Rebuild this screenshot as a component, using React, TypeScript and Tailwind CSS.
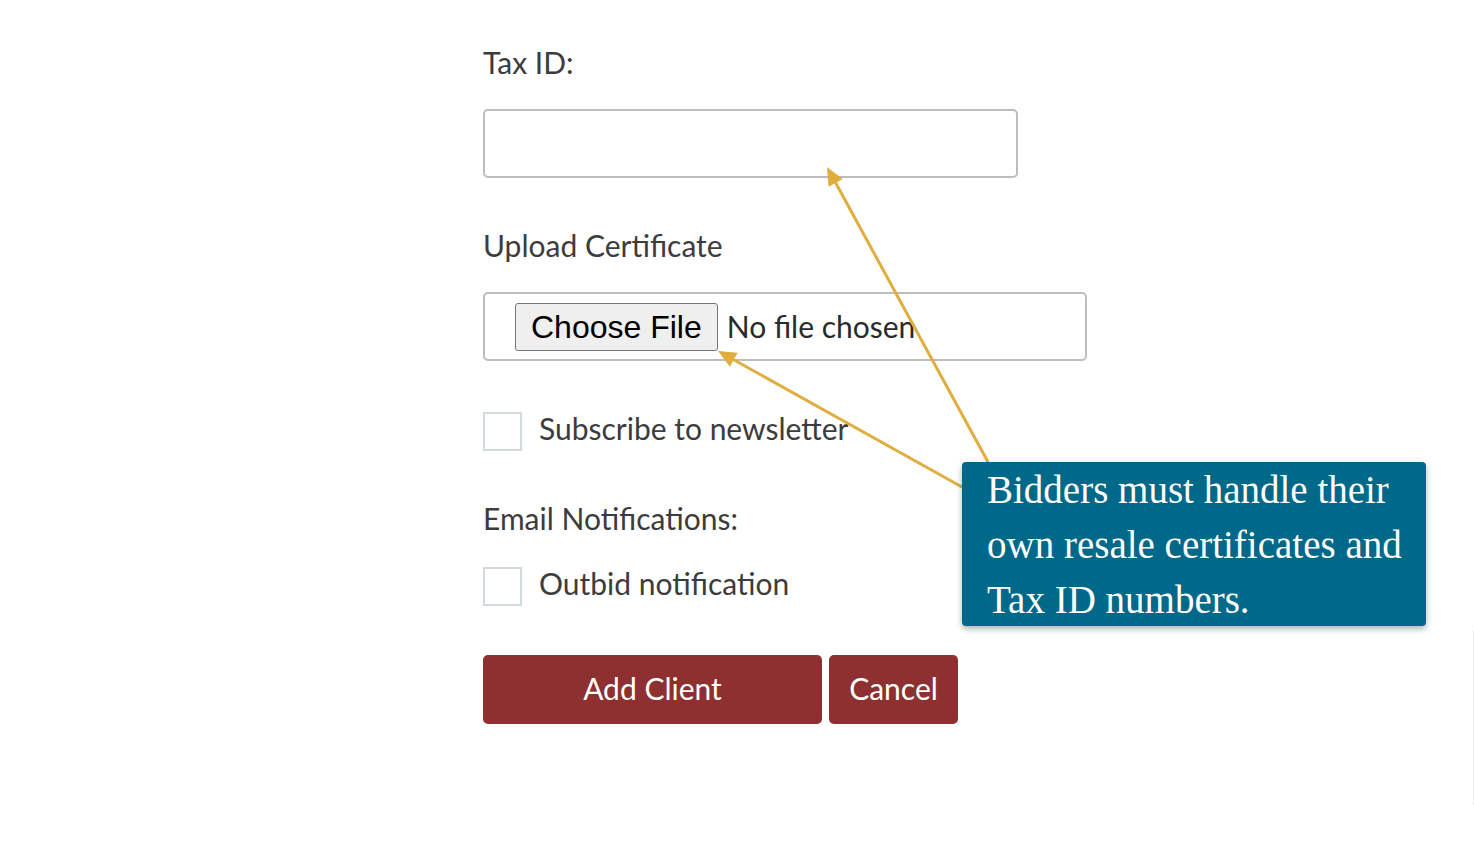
import React from 'react';

const sans = { fontFamily: 'Lato, "Noto Sans", sans-serif' };

function arrowHead(x1: number, y1: number, x2: number, y2: number, len = 18, half = 8) {
  const dx = x2 - x1;
  const dy = y2 - y1;
  const d = Math.hypot(dx, dy);
  const ux = dx / d;
  const uy = dy / d;
  const bx = x2 - ux * len;
  const by = y2 - uy * len;
  const px = -uy * half;
  const py = ux * half;
  return {
    points: `${x2},${y2} ${bx + px},${by + py} ${bx - px},${by - py}`,
    bx,
    by,
  };
}

function Arrow({ x1, y1, x2, y2 }: { x1: number; y1: number; x2: number; y2: number }) {
  const h = arrowHead(x1, y1, x2, y2);
  return (
    <g>
      <line x1={x1} y1={y1} x2={h.bx} y2={h.by} stroke="#dfae3f" strokeWidth={3} />
      <polygon points={h.points} fill="#dfae3f" />
    </g>
  );
}

function Check({ label }: { label: string }) {
  return (
    <label className="flex items-center gap-[17px] h-[39px]">
      <span className="w-[39px] h-[39px] border-2 border-[#d3dadd] bg-white" />
      <span className="text-[30px] leading-[40px] -mt-[8px] text-[#3c3c3c]">{label}</span>
    </label>
  );
}

export default function App() {
  return (
    <div className="relative w-[1474px] h-[846px] bg-white overflow-hidden" style={sans}>
      <div className="ml-[483px] pt-[42px] flex flex-col">
        <div className="text-[30px] leading-[40px] text-[#3c3c3c]">Tax ID:</div>
        <div className="mt-[27px] w-[535px] h-[69px] border-2 border-[#bdbdbd] rounded-[5px]" />

        <div className="mt-[47px] text-[30px] leading-[40px] text-[#3c3c3c]">Upload Certificate</div>
        <div className="mt-[27px] w-[604px] h-[69px] border-2 border-[#bdbdbd] rounded-[5px] flex items-center pl-[30px]">
          <span
            className="h-[48px] px-[15px] flex items-center bg-[#efefef] border-[1.5px] border-[#767676] rounded-[3px] text-[32px] text-black"
            style={{ fontFamily: '"Liberation Sans", Arial, sans-serif' }}
          >
            Choose File
          </span>
          <span className="ml-[9px] text-[30px] text-[#2a2a2a]">No file chosen</span>
        </div>

        <div className="mt-[51px]">
          <Check label="Subscribe to newsletter" />
        </div>

        <div className="mt-[47px] text-[30px] leading-[40px] text-[#3c3c3c]">Email Notifications:</div>
        <div className="mt-[29px]">
          <Check label="Outbid notification" />
        </div>

        <div className="mt-[49px] flex gap-[7px]">
          <button className="w-[339px] h-[69px] bg-[#8e3030] rounded-[5px] text-white text-[30px] pb-[3px]">Add Client</button>
          <button className="w-[129px] h-[69px] bg-[#8e3030] rounded-[5px] text-white text-[30px] pb-[3px]">Cancel</button>
        </div>
      </div>

      <svg className="absolute inset-0 pointer-events-none" width={1474} height={846}>
        <Arrow x1={988} y1={462} x2={827} y2={167} />
        <Arrow x1={962} y1={487} x2={718} y2={351} />
      </svg>

      <div
        className="absolute left-[962px] top-[462px] w-[464px] h-[164px] bg-[#006888] rounded-[4px] shadow-[0_3px_6px_rgba(0,0,0,0.3)] pl-[25px] text-white text-[39px] leading-[55px]"
        style={{ fontFamily: '"Liberation Serif", "Times New Roman", serif' }}
      >
        Bidders must handle their own resale certificates and Tax ID numbers.
      </div>

      <div className="absolute left-[1473px] top-[630px] w-px h-[175px] bg-[#ececec]" />
    </div>
  );
}
